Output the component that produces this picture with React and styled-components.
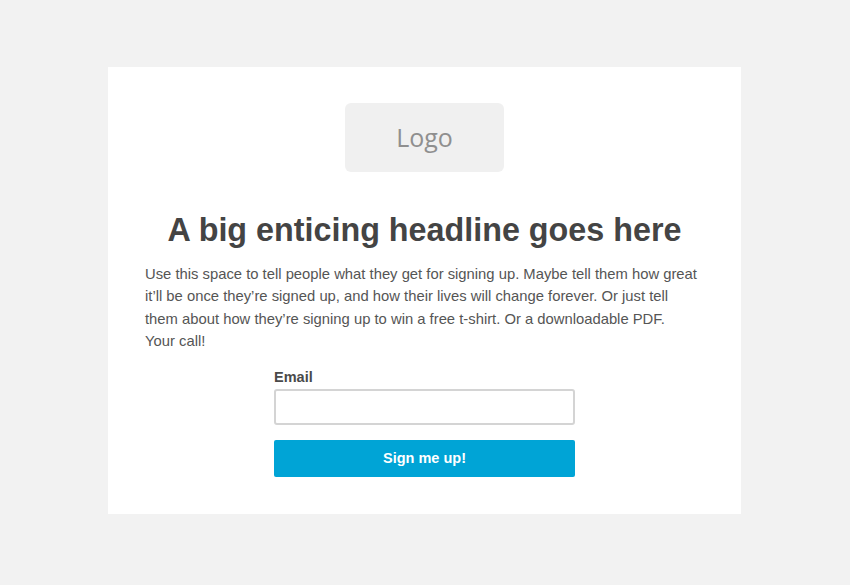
import React from 'react'
import styled, { createGlobalStyle } from 'styled-components';

const GlobalStyle = createGlobalStyle`
    html, body {
        margin: 0;
        padding: 0;
        background: #f2f2f2;
    }
    body {
        font-family: "Liberation Sans", Arial, sans-serif;
    }
`;

function App() {
    return (
        <PageStyled>
            <GlobalStyle />
            <Card>
                <LogoBox>Logo</LogoBox>
                <Headline>A big enticing headline goes here</Headline>
                <Paragraph>
                    Use this space to tell people what they get for signing up. Maybe tell them how great
                    it’ll be once they’re signed up, and how their lives will change forever. Or just tell
                    them about how they’re signing up to win a free t-shirt. Or a downloadable PDF.
                    Your call!
                </Paragraph>
                <SignupForm onSubmit={(e) => e.preventDefault()}>
                    <Label htmlFor="email">Email</Label>
                    <EmailInput id="email" type="email" />
                    <SubmitButton type="submit">Sign me up!</SubmitButton>
                </SignupForm>
            </Card>
        </PageStyled>
    )
}

const PageStyled = styled.div`
    min-height: 585px;
    padding: 67px 109px 0 108px;
    box-sizing: border-box;
    display: flex;
    justify-content: center;
    align-items: flex-start;
`;

const Card = styled.div`
    width: 633px;
    height: 447px;
    box-sizing: border-box;
    background: #fff;
    padding: 36px 37px 0;
    display: flex;
    flex-direction: column;
    align-items: center;
`;

const LogoBox = styled.div`
    width: 159px;
    height: 69px;
    border-radius: 6px;
    background: #f0f0f0;
    display: flex;
    align-items: center;
    justify-content: center;
    font-family: "Open Sans", sans-serif;
    font-size: 25px;
    color: #8f8f8f;
    padding-bottom: 2px;
    box-sizing: border-box;
`;

const Headline = styled.h1`
    margin: 39px 0 0;
    font-size: 32.3px;
    line-height: 38px;
    font-weight: 700;
    color: #444;
    text-align: center;
`;

const Paragraph = styled.p`
    align-self: stretch;
    margin: 14px 0 0;
    padding-right: 6px;
    font-size: 14.8px;
    line-height: 22.4px;
    color: #555;
`;

const SignupForm = styled.form`
    width: 301px;
    margin-top: 15px;
    display: flex;
    flex-direction: column;
`;

const Label = styled.label`
    font-size: 14.5px;
    font-weight: 700;
    color: #4a4a4a;
    line-height: 18px;
    margin-bottom: 3px;
`;

const EmailInput = styled.input`
    height: 36px;
    box-sizing: border-box;
    border: 2px solid #d4d4d4;
    border-radius: 3px;
    background: #fff;
    outline: none;
`;

const SubmitButton = styled.button`
    margin-top: 15px;
    height: 37px;
    border: none;
    border-radius: 2px;
    background: #00a4d6;
    color: #fff;
    font-family: "Liberation Sans", Arial, sans-serif;
    font-size: 14.5px;
    font-weight: 700;
    cursor: pointer;
`;

export default App;
